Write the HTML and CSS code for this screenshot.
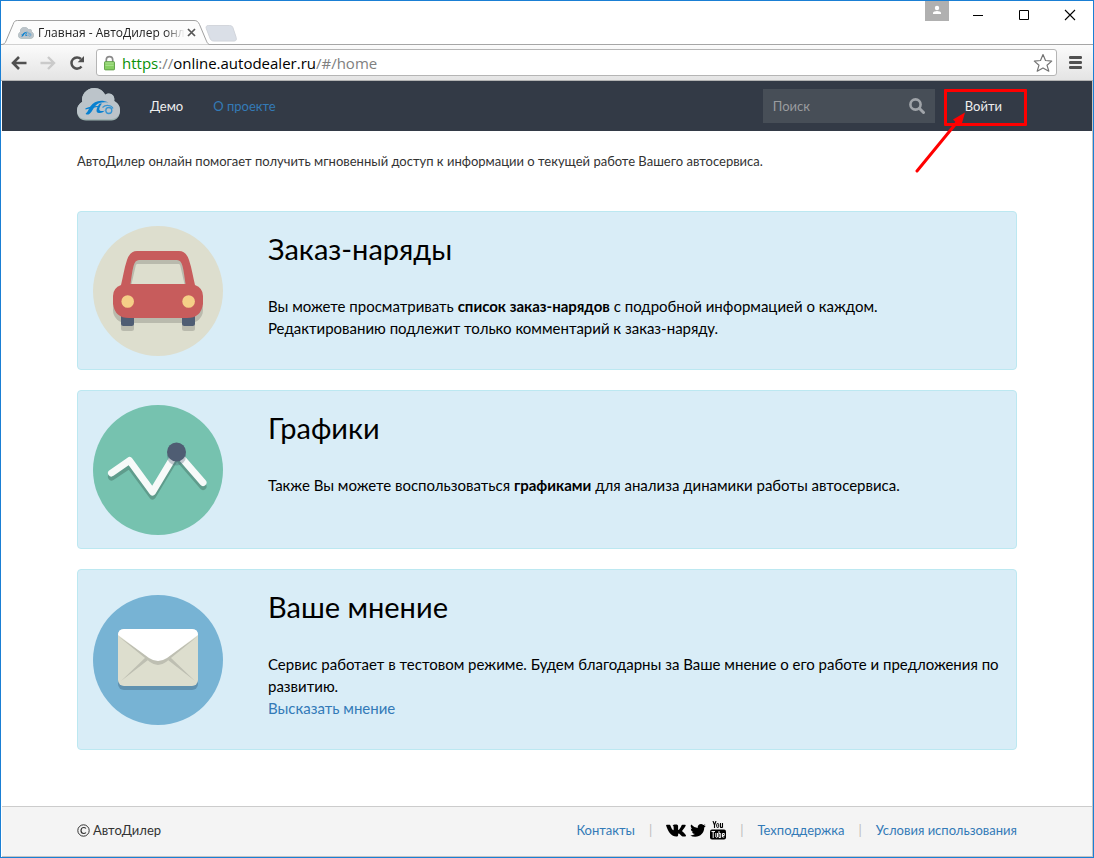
FILE: index.html
```html
<!DOCTYPE html>
<html lang="ru">
<head>
<meta charset="utf-8">
<meta name="viewport" content="width=device-width, initial-scale=1">
<title>Главная - АвтоДилер онлайн</title>
<link rel="stylesheet" href="styles.css">
</head>
<body>
<svg class="defs" aria-hidden="true">
  <symbol id="logo" viewBox="0 0 43 33">
    <path d="M9 32.500C3.500 32.500 0 28.500 0 23.500 0 18 2.500 15.500 5.200 14 3.800 7.500 9 0 17.500 0 22.500 0 26.500 3 28.200 6.800 32.500 3.500 38.500 7 37.200 13 41.500 15.500 43 18.500 43 23c0 5.500-3.500 9.500-8.500 9.500z" fill="#9fb4b2"/>
    <path d="M9 31C3.500 31 0 27.500 0 22.500 0 18 2.500 15.500 5.200 14 3.800 7.500 9 0 17.500 0 22.500 0 26.500 3 28.200 6.800 32.500 3.500 38.500 7 37.200 13 41.500 15.500 43 18.500 43 22c0 5.500-3.500 9-8.500 9z" fill="#bcc4ca"/>
    <path d="M13.500 18.200C17 13.500 23.500 10.800 31.500 14.600 26 13.600 21 14.600 18.500 17.700 16 20.300 14.800 25 11.500 26.400 10 26.700 8.300 26.300 8.800 25.500 11 23.500 12 20.500 13.500 18.200z" fill="#0880d0"/>
    <path d="M8.500 20.200C14 18.200 19 17.700 23.500 18.200 19 19.300 14.500 20 8.500 21.400z" fill="#0880d0"/>
    <path d="M22.800 15.500C19.300 19.500 17.800 25.500 22.500 25 25 24.700 27 23.600 28 22.400 26 23.200 22.700 23.500 22.300 21.800 22 20 23.300 17.500 25 15.500z" fill="#0880d0"/>
    <circle cx="31.800" cy="22.500" r="3" fill="none" stroke="#3694d2" stroke-width="1.300"/>
    <path d="M25.500 19.500C28.500 16.500 34.500 16.800 36 20.500" fill="none" stroke="#3694d2" stroke-width="1.200"/>
  </symbol>
</svg>

<div class="window">
  <header class="browser">
    <div class="titlebar">
      <div class="tab">
        <svg class="tab-shape" viewBox="0 0 208 25" preserveAspectRatio="none" aria-hidden="true">
          <path d="M0 24.500C3 24.500 4 23.500 5 21L12 4.500C13 1.500 14 .5 16.500 .5H193C196 .5 197 1.500 198.500 4.500L205 20C206.500 23.500 207 24.500 210 24.500" fill="#fcfcfc" stroke="#a0a0a0"/>
        </svg>
        <svg class="favicon" aria-hidden="true"><use href="#logo"/></svg>
        <span class="tab-title">Главная - АвтоДилер онл</span>
        <button class="tab-close" aria-label="Закрыть вкладку"><svg viewBox="0 0 9 9"><path d="M1 1l7 7M8 1l-7 7" stroke="#555" stroke-width="1.700"/></svg></button>
      </div>
      <button class="new-tab" aria-label="Новая вкладка"><svg viewBox="0 0 34 18"><path d="M3.500 .5H26c2 0 3 .7 3.700 2.500L33 13c.7 2.500 0 4-2 4H9.500c-2 0-3.300-1-4-2.500L1.500 4C.7 2 1.500 .5 3.500 .5z" fill="#dadfe7" stroke="#d0d3da"/></svg></button>
      <div class="window-controls">
        <button class="profile" aria-label="Профиль"><svg viewBox="0 0 24 20"><circle cx="12" cy="7" r="2.200" fill="#fff"/><path d="M8 13v-1.200c0-1 2.200-1.800 4-1.800s4 .8 4 1.800V13z" fill="#fff"/></svg></button>
        <button class="control" aria-label="Свернуть"><svg viewBox="0 0 12 12"><path d="M1 6.500h10" stroke="#000"/></svg></button>
        <button class="control" aria-label="Развернуть"><svg viewBox="0 0 12 12"><path d="M1.500 1.500h9v9h-9z" fill="none" stroke="#000"/></svg></button>
        <button class="control" aria-label="Закрыть"><svg viewBox="0 0 12 12"><path d="M1 1l10 10M11 1L1 11" stroke="#000" stroke-width="1.100"/></svg></button>
      </div>
    </div>
    <div class="toolbar">
      <button class="tool" aria-label="Назад"><svg viewBox="0 0 16 14"><path d="M15.500 7H2.500M8 1L2 7l6 6" fill="none" stroke="#505050" stroke-width="2.600"/></svg></button>
      <button class="tool" aria-label="Вперёд"><svg viewBox="0 0 16 14"><path d="M.5 7h13M8 1l6 6-6 6" fill="none" stroke="#cacaca" stroke-width="2.400"/></svg></button>
      <button class="tool" aria-label="Обновить"><svg viewBox="0 0 16 14"><path d="M12.500 10.500A5.600 5.600 0 1 1 12 3" fill="none" stroke="#505050" stroke-width="2.500"/><path d="M15 0v6.300H8.700z" fill="#505050"/></svg></button>
      <div class="address">
        <svg class="lock" viewBox="0 0 12 16" aria-hidden="true"><path d="M2.500 8V4.500a3.500 3.500 0 0 1 7 0V8" fill="none" stroke="#8a8a8a" stroke-width="1.800"/><rect x=".5" y="6.500" width="11" height="9" rx="1" fill="#86cf62" stroke="#5c9a45"/><path d="M1.500 8h9M1.500 10.500h9" stroke="#b4e69a"/></svg>
        <span class="url"><span class="scheme">https</span>://<span class="host">online.autodealer.ru</span>/#/home</span>
        <button class="star" aria-label="В закладки"><svg viewBox="0 0 20 20"><path d="M10 1.500l2.500 6 6.200.6-4.700 4.100 1.800 6L10 14.900l-5.800 3.300 1.800-6L1.300 8.100l6.200-.6z" fill="#fff" stroke="#747474" stroke-width="1.200" stroke-linejoin="round"/></svg></button>
      </div>
      <button class="menu" aria-label="Меню"><svg viewBox="0 0 13 13"><path d="M1.200 1.500h10.600M1.200 6.500h10.600M1.200 11.500h10.600" stroke="#505050" stroke-width="2.800" stroke-linecap="round"/></svg></button>
    </div>
  </header>

  <div class="page">
    <nav class="navbar">
      <div class="container nav-row">
        <a class="brand" href="#/" aria-label="АвтоДилер"><svg><use href="#logo"/></svg></a>
        <a class="nav-link nav-demo" href="#/demo">Демо</a>
        <a class="nav-link nav-about" href="#/about">О проекте</a>
        <form class="search" role="search">
          <input type="text" placeholder="Поиск" aria-label="Поиск">
          <button type="button" aria-label="Найти"><svg viewBox="0 0 16 16"><circle cx="6.500" cy="6.500" r="5.100" fill="none" stroke="#a0a4a9" stroke-width="2.600"/><path d="M10.500 10.500l4 4" stroke="#a0a4a9" stroke-width="3" stroke-linecap="round"/></svg></button>
        </form>
        <div class="login">
          <a class="nav-link" href="#/login">Войти</a>
          <span class="highlight"></span>
          <svg class="arrow" viewBox="0 0 52 62" aria-hidden="true"><path d="M2 60L43 10" stroke="#f00" stroke-width="3" stroke-linecap="round"/><path d="M50 1.500L46.500 14 42 12.500 38 8.500z" fill="#f00"/></svg>
        </div>
      </div>
    </nav>

    <main class="container">
      <p class="intro">АвтоДилер онлайн помогает получить мгновенный доступ к информации о текущей работе Вашего автосервиса.</p>

      <section class="card">
        <svg class="picture" viewBox="0 0 130 130" aria-hidden="true">
          <circle cx="65" cy="65" r="65" fill="#dddece"/>
          <g fill="#b9baad"><rect x="28" y="90" width="13" height="15" rx="2.500"/><rect x="89" y="90" width="13" height="15" rx="2.500"/><rect x="20" y="70" width="90" height="27" rx="13"/></g>
          <path d="M33 62L38.500 38Q40 33.500 44.500 33.500H85.500Q90 33.500 91.500 38L97 62" fill="none" stroke="#b9baad" stroke-width="9"/>
          <path d="M28 88h13v9.500q0 2.500-2.500 2.500h-8q-2.500 0-2.500-2.500zM89 88h13v9.500q0 2.500-2.500 2.500h-8q-2.500 0-2.500-2.500z" fill="#4f5d73"/>
          <path d="M28 59C30 51 31 43 34 34Q37 25 44 25H86Q93 25 96 34C99 43 100 51 102 59Q110 62 110 70V78Q108 92 94 92H36Q22 92 20 78V70Q20 62 28 59zM37.500 58H92.500C91.500 51 91 46 89.500 40Q88 34 84 34H46Q42 34 40.500 40C39 46 38.500 51 37.500 58z" fill="#c75c5c" fill-rule="evenodd"/>
          <circle cx="34.700" cy="75.500" r="6.300" fill="#f5cf87"/><circle cx="95.600" cy="75.500" r="6.300" fill="#f5cf87"/>
        </svg>
        <div class="card-text">
          <h2>Заказ-наряды</h2>
          <p>Вы можете просматривать <strong>список заказ-нарядов</strong> с подробной информацией о каждом.<br>Редактированию подлежит только комментарий к заказ-наряду.</p>
        </div>
      </section>

      <section class="card">
        <svg class="picture" viewBox="0 0 130 130" aria-hidden="true">
          <circle cx="65" cy="65" r="65" fill="#76c2af"/>
          <g fill="none" stroke-width="7" stroke-linecap="round" stroke-linejoin="round">
            <path d="M18.500 72L36.500 60 59.500 91 83.500 51 110 81.500" stroke="#5f9c8c"/>
            <path d="M18.500 68L36.500 55.500 59.500 87 83.500 47 110 77.500" stroke="#f7faf9"/>
          </g>
          <circle cx="83.500" cy="51" r="9.500" fill="#4f5d73" opacity=".32"/>
          <circle cx="83.500" cy="47" r="9.500" fill="#4f5d73"/>
        </svg>
        <div class="card-text">
          <h2>Графики</h2>
          <p>Также Вы можете воспользоваться <strong>графиками</strong> для анализа динамики работы автосервиса.</p>
        </div>
      </section>

      <section class="card">
        <svg class="picture" viewBox="0 0 130 130" aria-hidden="true">
          <circle cx="65" cy="65" r="65" fill="#77b3d4"/>
          <rect x="25" y="38" width="80" height="57" rx="6" fill="#6092b0"/>
          <rect x="25" y="34" width="80" height="57" rx="6" fill="#dddece"/>
          <path d="M28 86L52.500 62.500 55 65zM102 86L77.500 62.500 75 65z" fill="#bebfb2"/>
          <path d="M25 41L57 67Q65 73 73 67L105 41 73 63H57z" fill="#bebfb2"/>
          <path d="M25 40Q25 34 31 34H99Q105 34 105 40L74 63Q65 69 56 63z" fill="#fff"/>
        </svg>
        <div class="card-text">
          <h2>Ваше мнение</h2>
          <p>Сервис работает в тестовом режиме. Будем благодарны за Ваше мнение о его работе и предложения по развитию.<br><a href="#/feedback">Высказать мнение</a></p>
        </div>
      </section>
    </main>

    <footer class="footer">
      <div class="container footer-row">
        <span class="copyright"><svg viewBox="0 0 13 13" aria-hidden="true"><circle cx="6.500" cy="6.500" r="5.700" fill="none" stroke="#333"/><path d="M8.900 4.500Q8.100 3.500 6.800 3.500C5 3.500 4 4.800 4 6.500s1 3 2.800 3q1.300 0 2.100-1" fill="none" stroke="#333" stroke-width="1.200"/></svg>АвтоДилер</span>
        <div class="footer-links">
          <a href="#/contacts">Контакты</a>
          <span class="divider">|</span>
          <span class="social">
            <a href="#/vk" aria-label="ВКонтакте"><svg class="vk" viewBox="0 0 20 13"><path d="M0 1.200Q0 .8.700.8H3.600Q4.200.8 4.400 1.400C5.200 3.600 6.200 5.500 7 6.100 7.600 6.400 7.700 5.600 7.700 4.400 7.700 2.600 7.500 1.900 6.500 1.600 7 .7 8.200.4 9.600.4 11.600.4 12.100.9 12.100 2V5.200C12.100 6 12.600 6.100 13 5.700 14 4.800 14.900 3 15.500 1.500 15.700 1 16 .8 16.500.8H19Q19.900.8 19.700 1.600C19.200 3.400 17.600 5 16.400 6.400 16 6.900 16 7.200 16.400 7.600 17.600 8.700 19.200 10 19.900 11.300 20.200 12 19.800 12.400 19.200 12.400H16.500C15.400 12.400 14.400 10.500 13.300 9.800 12.500 9.300 12.100 9.700 12.100 10.600V11.500Q12.100 12.300 11.200 12.400C5.800 12.900 2.500 8.800 0 1.200z"/></svg></a>
            <a href="#/twitter" aria-label="Twitter"><svg class="twitter" viewBox="0 0 16 13"><path d="M15.800 1.700q-.7 1-1.600 1.700C14.400 8.500 10.700 12.800 5.200 12.800q-2.800 0-5-1.400 2.600.2 4.700-1.300-2.300-.2-3-2.300h1.400Q.7 7 .7 4.400q.7.400 1.400.4Q-.1 2.900 1.200.6 3.800 3.700 7.800 3.900C7.300 1.900 8.800 0 11 0q1.400 0 2.300 1 1.100-.2 2-.8-.3 1.200-1.400 1.800 1-.1 1.900-.3z"/></svg></a>
            <a href="#/youtube" aria-label="YouTube"><svg class="youtube" viewBox="0 0 16 19"><path d="M3 0l1.500 4V7M6 0L4.500 4" fill="none" stroke="#000" stroke-width="1.100"/><rect x="6.700" y="2.500" width="2" height="4" rx="1" fill="none" stroke="#000"/><path d="M10.500 2v4q.3 1 2 0V2M12.500 6.800V2" fill="none" stroke="#000" stroke-width="1.100"/><rect x="0" y="8.500" width="16" height="10" rx="2"/><path d="M1.500 10.500h3.500M3.200 10.500V17M5.800 12v4q.4 1 1.700 0v-4M9 10v6.500h1.700V12.500H9M14.300 16H12.500v-3.500h1.800v2h-1.500" fill="none" stroke="#f4f4f4"/></svg></a>
          </span>
          <span class="divider">|</span>
          <a href="#/support">Техподдержка</a>
          <span class="divider">|</span>
          <a href="#/terms">Условия использования</a>
        </div>
      </div>
    </footer>
  </div>
</div>
</body>
</html>
```
FILE: styles.css
```css
* { box-sizing: border-box; }

body {
  margin: 0;
  background: #fff;
  color: #333;
  font: 13px/20px Lato, "Open Sans", sans-serif;
}

button {
  display: flex;
  align-items: center;
  justify-content: center;
  padding: 0;
  border: 0;
  background: none;
}

a { color: #337ab7; text-decoration: none; }
svg { display: block; }
.defs { position: absolute; width: 0; height: 0; }

.window {
  display: flex;
  flex-direction: column;
  min-height: 100vh;
  border: 1px solid #1a7fd4;
}

/* Browser frame */
.titlebar {
  display: flex;
  align-items: flex-end;
  height: 44px;
  border-bottom: 1px solid #a6a6a6;
}

.tab {
  position: relative;
  display: flex;
  align-items: center;
  width: 208px;
  height: 25px;
  margin-bottom: -1px;
  padding: 0 16px 0 17px;
}

.tab-shape { position: absolute; inset: 0; width: 100%; height: 100%; }
.favicon { position: relative; flex: none; width: 16px; height: 12px; }

.tab-title {
  position: relative;
  flex: none;
  margin: 0 2px 0 4px;
  color: #222;
  font: 12px/20px "Open Sans", sans-serif;
  white-space: nowrap;
  -webkit-mask-image: linear-gradient(to left, transparent, #000 20px);
  mask-image: linear-gradient(to left, transparent, #000 20px);
}

.tab-close { position: relative; flex: none; width: 9px; height: 9px; }
.tab-close svg { width: 9px; height: 9px; }
.new-tab { align-self: flex-end; margin: 0 0 2px -5px; }
.new-tab svg { width: 34px; height: 17px; }

.window-controls {
  display: flex;
  align-self: flex-start;
  margin-left: auto;
}

.profile { width: 24px; height: 20px; margin-right: 6px; background: #b0b0b0; }
.profile svg { width: 24px; height: 20px; }
.control { width: 46px; height: 28px; }
.control svg { width: 12px; height: 12px; }

.toolbar {
  display: flex;
  align-items: center;
  height: 36px;
  padding: 0 11px 0 10px;
  border-bottom: 1px solid #b4b4b4;
  background: linear-gradient(#fbfbfb, #e4e4e4);
}

.tool { width: 16px; margin-right: 13px; }
.tool svg { width: 16px; height: 14px; }

.address {
  display: flex;
  flex: 1;
  align-items: center;
  min-width: 0;
  height: 27px;
  margin-right: 12px;
  margin-left: -2px;
  padding: 0 3px 0 7px;
  border: 1px solid #b5b5b5;
  border-radius: 3px;
  background: #fff;
}

.lock { width: 11px; height: 16px; margin-right: 7px; }
.url { flex: 1; color: #808080; font: 15px/24px "Open Sans", sans-serif; white-space: nowrap; }
.scheme { color: #0a9108; }
.host { color: #000; }
.star svg { width: 20px; height: 20px; }
.menu svg { width: 13px; height: 13px; }

/* Page */
.page {
  display: flex;
  flex: 1;
  flex-direction: column;
  margin: 0 0 0 1px;
  border-right: 1px solid #c4c4c4;
  border-bottom: 1px solid #c4c4c4;
}

.container { width: 100%; max-width: 940px; margin: 0 auto; }
.navbar { background: #333a46; }
.nav-row { display: flex; align-items: center; height: 50px; }
.brand { margin-right: 30px; padding-bottom: 3px; }
.brand svg { width: 43px; height: 33px; }
.nav-link { color: #eee; }
.nav-demo { margin-right: 30px; }
.nav-about { color: #337ab7; }

.search {
  display: flex;
  width: 172px;
  height: 34px;
  margin-left: auto;
  background: #474e57;
}

.search input {
  flex: 1;
  min-width: 0;
  padding: 0 10px;
  border: 0;
  background: none;
  color: #eee;
  font: inherit;
}

.search input::placeholder { color: #9a9c9f; opacity: 1; }
.search button { width: 36px; }
.search svg { width: 16px; height: 16px; }

.login { position: relative; margin-left: 15px; padding: 0 15px; }

.highlight {
  position: absolute;
  inset: -7px -10px -10px -6px;
  border: 3px solid #f00;
  border-radius: 1px;
  pointer-events: none;
}

.arrow {
  position: absolute;
  top: 15px;
  left: -35px;
  width: 52px;
  height: 62px;
  pointer-events: none;
}

.intro { margin: 20px 0 40px; }

.card {
  display: flex;
  align-items: center;
  margin-bottom: 20px;
  padding: 14px 14px 13px 15px;
  border: 1px solid #bce8f1;
  border-radius: 4px;
  background: #d9edf7;
  color: #000;
}

.picture { flex: none; width: 130px; height: 130px; margin-right: 45px; }
.card-text { flex: 1; align-self: flex-start; padding: 5px 0 17px; }
.card h2 { margin: 0 0 28px; font-size: 29px; font-weight: 400; line-height: 36px; }
.card p { margin: 0; font-size: 15px; line-height: 22px; }

.footer {
  margin-top: auto;
  border-top: 1px solid #ccc;
  background: #f4f4f4;
}

.footer-row { display: flex; align-items: center; justify-content: space-between; height: 49px; padding-bottom: 3px; }
.copyright { display: flex; align-items: center; gap: 3px; }
.copyright svg { width: 13px; height: 13px; }
.footer-links { display: flex; align-items: center; gap: 14px; }
.divider { color: #bbb; }
.social { display: flex; align-items: center; gap: 4px; }
.vk { width: 20px; height: 13px; }
.twitter { width: 16px; height: 13px; }
.youtube { width: 16px; height: 19px; }
```
